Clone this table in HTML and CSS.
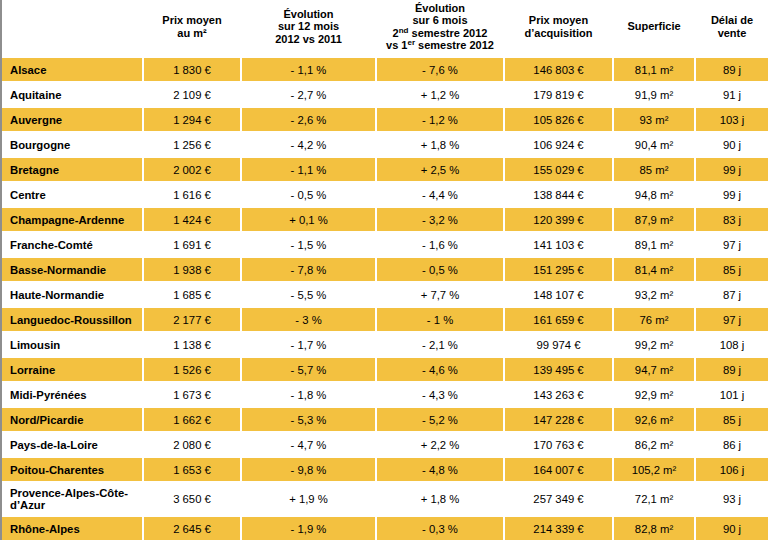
FILE: index.html
```html
<!DOCTYPE html>
<html lang="fr">
<head>
<meta charset="utf-8">
<title>Prix de l'immobilier par région</title>
<link rel="stylesheet" href="styles.css">
</head>
<body>
<div class="frame">
<table class="prices">
  <colgroup>
    <col class="c-region">
    <col class="c-m2">
    <col class="c-ev12">
    <col class="c-ev6">
    <col class="c-acq">
    <col class="c-surf">
    <col class="c-delai">
  </colgroup>
  <thead>
    <tr>
      <th></th>
      <th>Prix moyen<br>au m²</th>
      <th>Évolution<br>sur 12 mois<br>2012 vs 2011</th>
      <th>Évolution<br>sur 6 mois<br>2<sup>nd</sup> semestre 2012<br>vs 1<sup>er</sup> semestre 2012</th>
      <th>Prix moyen<br>d’acquisition</th>
      <th>Superficie</th>
      <th>Délai de<br>vente</th>
    </tr>
  </thead>
  <tbody>
    <tr class="hl"><th>Alsace</th><td>1 830 €</td><td>- 1,1 %</td><td>- 7,6 %</td><td>146 803 €</td><td>81,1 m²</td><td>89 j</td></tr>
    <tr><th>Aquitaine</th><td>2 109 €</td><td>- 2,7 %</td><td>+ 1,2 %</td><td>179 819 €</td><td>91,9 m²</td><td>91 j</td></tr>
    <tr class="hl"><th>Auvergne</th><td>1 294 €</td><td>- 2,6 %</td><td>- 1,2 %</td><td>105 826 €</td><td>93 m²</td><td>103 j</td></tr>
    <tr><th>Bourgogne</th><td>1 256 €</td><td>- 4,2 %</td><td>+ 1,8 %</td><td>106 924 €</td><td>90,4 m²</td><td>90 j</td></tr>
    <tr class="hl"><th>Bretagne</th><td>2 002 €</td><td>- 1,1 %</td><td>+ 2,5 %</td><td>155 029 €</td><td>85 m²</td><td>99 j</td></tr>
    <tr><th>Centre</th><td>1 616 €</td><td>- 0,5 %</td><td>- 4,4 %</td><td>138 844 €</td><td>94,8 m²</td><td>99 j</td></tr>
    <tr class="hl"><th>Champagne-Ardenne</th><td>1 424 €</td><td>+ 0,1 %</td><td>- 3,2 %</td><td>120 399 €</td><td>87,9 m²</td><td>83 j</td></tr>
    <tr><th>Franche-Comté</th><td>1 691 €</td><td>- 1,5 %</td><td>- 1,6 %</td><td>141 103 €</td><td>89,1 m²</td><td>97 j</td></tr>
    <tr class="hl"><th>Basse-Normandie</th><td>1 938 €</td><td>- 7,8 %</td><td>- 0,5 %</td><td>151 295 €</td><td>81,4 m²</td><td>85 j</td></tr>
    <tr><th>Haute-Normandie</th><td>1 685 €</td><td>- 5,5 %</td><td>+ 7,7 %</td><td>148 107 €</td><td>93,2 m²</td><td>87 j</td></tr>
    <tr class="hl"><th>Languedoc-Roussillon</th><td>2 177 €</td><td>- 3 %</td><td>- 1 %</td><td>161 659 €</td><td>76 m²</td><td>97 j</td></tr>
    <tr><th>Limousin</th><td>1 138 €</td><td>- 1,7 %</td><td>- 2,1 %</td><td>99 974 €</td><td>99,2 m²</td><td>108 j</td></tr>
    <tr class="hl"><th>Lorraine</th><td>1 526 €</td><td>- 5,7 %</td><td>- 4,6 %</td><td>139 495 €</td><td>94,7 m²</td><td>89 j</td></tr>
    <tr><th>Midi-Pyrénées</th><td>1 673 €</td><td>- 1,8 %</td><td>- 4,3 %</td><td>143 263 €</td><td>92,9 m²</td><td>101 j</td></tr>
    <tr class="hl"><th>Nord/Picardie</th><td>1 662 €</td><td>- 5,3 %</td><td>- 5,2 %</td><td>147 228 €</td><td>92,6 m²</td><td>85 j</td></tr>
    <tr><th>Pays-de-la-Loire</th><td>2 080 €</td><td>- 4,7 %</td><td>+ 2,2 %</td><td>170 763 €</td><td>86,2 m²</td><td>86 j</td></tr>
    <tr class="hl"><th>Poitou-Charentes</th><td>1 653 €</td><td>- 9,8 %</td><td>- 4,8 %</td><td>164 007 €</td><td>105,2 m²</td><td>106 j</td></tr>
    <tr><th>Provence-Alpes-Côte-d’Azur</th><td>3 650 €</td><td>+ 1,9 %</td><td>+ 1,8 %</td><td>257 349 €</td><td>72,1 m²</td><td>93 j</td></tr>
    <tr class="hl"><th>Rhône-Alpes</th><td>2 645 €</td><td>- 1,9 %</td><td>- 0,3 %</td><td>214 339 €</td><td>82,8 m²</td><td>90 j</td></tr>
  </tbody>
</table>
</div>
</body>
</html>
```
FILE: styles.css
```css
html, body {
  margin: 0;
  padding: 0;
  background: #ffffff;
  overflow: hidden;
}

body {
  font-family: "Liberation Sans", Arial, sans-serif;
  font-size: 11.3px;
  color: #000000;
}

.frame {
  border-left: 2px solid #8e8e8e;
  min-height: 540px;
}

.prices {
  border-collapse: separate;
  border-spacing: 2px;
  table-layout: fixed;
  width: 770px;
  margin: -2px 0 0 -2px;
}

.c-region { width: 140px; }
.c-m2 { width: 96px; }
.c-ev12 { width: 133px; }
.c-ev6 { width: 126px; }
.c-acq { width: 107px; }
.c-surf { width: 80px; }
.c-delai { width: 72px; }

.prices thead th {
  height: 56px;
  box-sizing: border-box;
  padding: 0 0 3px;
  font-size: 11px;
  font-weight: bold;
  line-height: 12.5px;
  text-align: center;
  vertical-align: middle;
}

.prices sup {
  font-size: 8px;
  line-height: 0;
  vertical-align: 4px;
}

.prices tbody th,
.prices tbody td {
  box-sizing: border-box;
  height: 23px;
  padding: 4px 0;
  line-height: 12px;
  vertical-align: middle;
}

.prices tbody th {
  text-align: left;
  font-weight: bold;
  padding-left: 8px;
  padding-right: 6px;
}

.prices tbody td {
  text-align: center;
  white-space: nowrap;
}

.prices tbody tr.hl th,
.prices tbody tr.hl td {
  background: #f3c140;
}
```
